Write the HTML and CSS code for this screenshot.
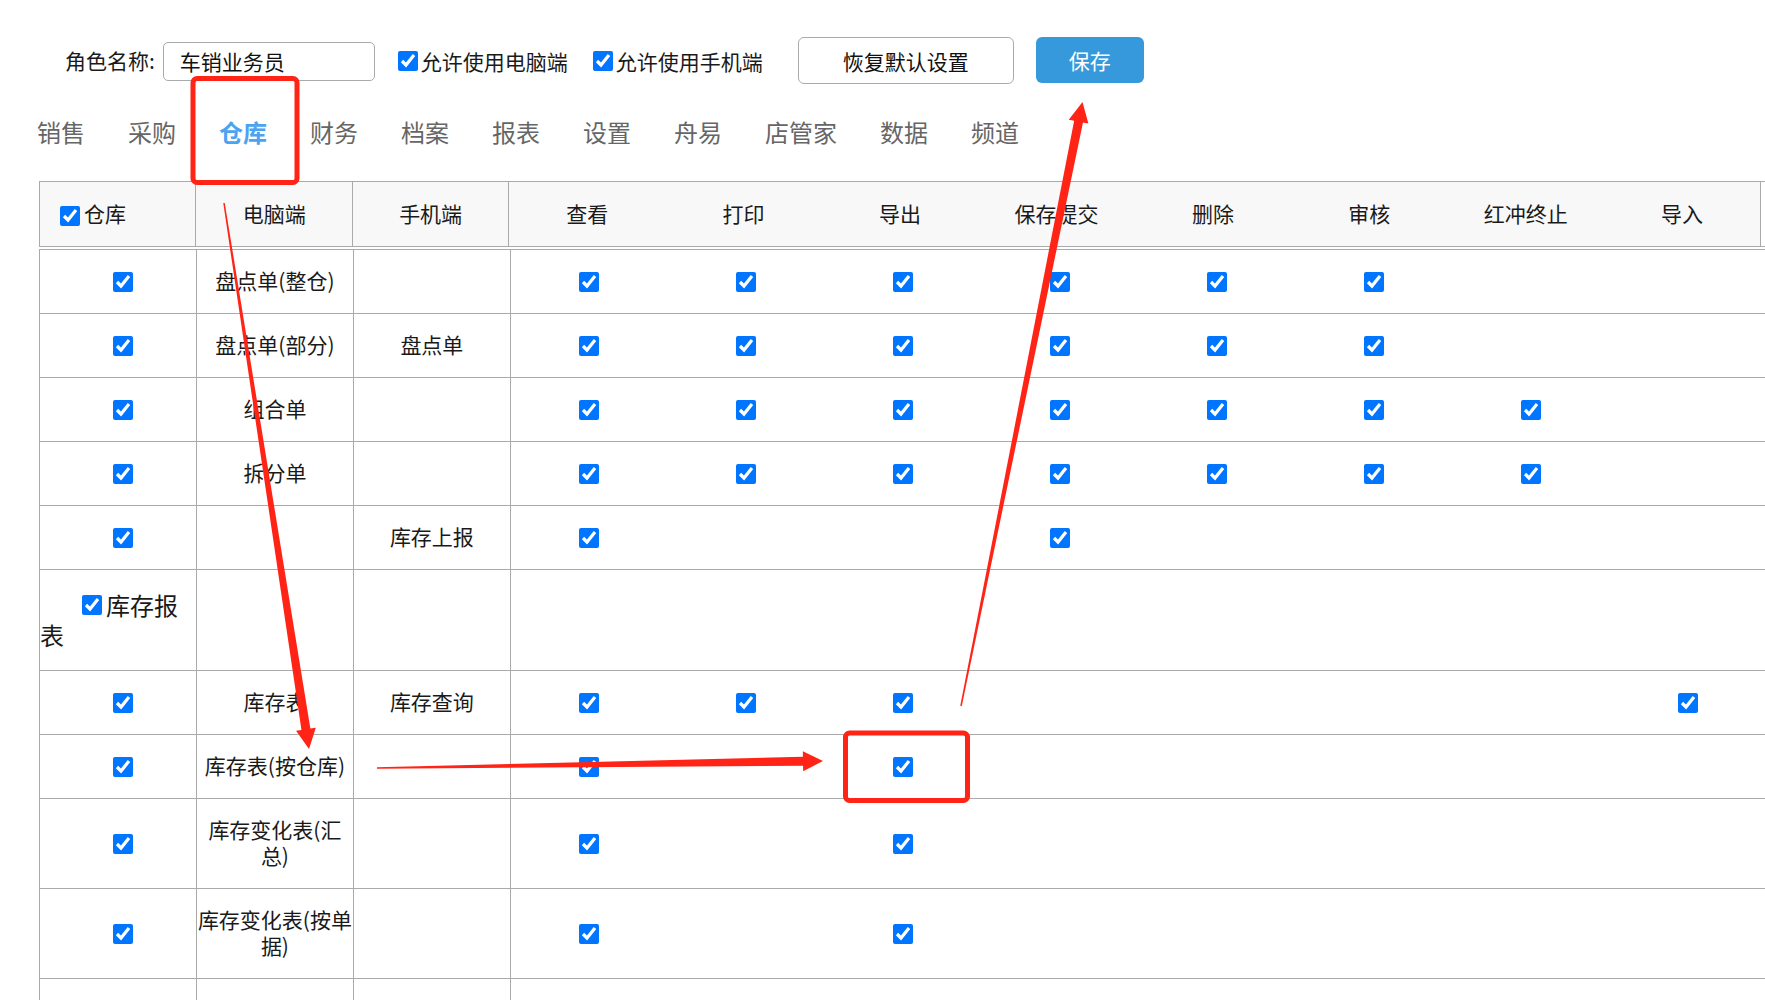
FILE: index.html
```html
<!DOCTYPE html>
<html lang="zh-CN">
<head>
<meta charset="utf-8">
<title>角色权限</title>
<link rel="stylesheet" href="styles.css">
</head>
<body>
<div class="page">
  <div class="toolbar">
    <span class="label">角色名称:</span>
    <input class="name-input" type="text" value="车销业务员">
    <label class="opt opt-pc"><input type="checkbox" class="cb" checked>允许使用电脑端</label>
    <label class="opt opt-mobile"><input type="checkbox" class="cb" checked>允许使用手机端</label>
    <button class="btn btn-reset">恢复默认设置</button>
    <button class="btn btn-save">保存</button>
  </div>

  <nav class="tabs">
    <span class="tab">销售</span>
    <span class="tab">采购</span>
    <span class="tab active">仓库</span>
    <span class="tab">财务</span>
    <span class="tab">档案</span>
    <span class="tab">报表</span>
    <span class="tab">设置</span>
    <span class="tab">舟易</span>
    <span class="tab">店管家</span>
    <span class="tab">数据</span>
    <span class="tab">频道</span>
  </nav>

  <div class="grid-head">
    <table class="head-table">
      <tr>
        <th class="th-first"><input type="checkbox" class="cb cb-head" checked>仓库</th>
        <th>电脑端</th>
        <th>手机端</th>
        <th>查看</th>
        <th>打印</th>
        <th>导出</th>
        <th>保存提交</th>
        <th>删除</th>
        <th>审核</th>
        <th>红冲终止</th>
        <th>导入</th>
      </tr>
    </table>
  </div>

  <div class="grid-body">
    <table class="body-table">
      <tr>
        <td class="c-first"><input type="checkbox" class="cb" checked></td>
        <td>盘点单(整仓)</td><td></td>
        <td><input type="checkbox" class="cb" checked></td>
        <td><input type="checkbox" class="cb" checked></td>
        <td><input type="checkbox" class="cb" checked></td>
        <td><input type="checkbox" class="cb" checked></td>
        <td><input type="checkbox" class="cb" checked></td>
        <td><input type="checkbox" class="cb" checked></td>
        <td></td><td></td>
      </tr>
      <tr>
        <td class="c-first"><input type="checkbox" class="cb" checked></td>
        <td>盘点单(部分)</td><td>盘点单</td>
        <td><input type="checkbox" class="cb" checked></td>
        <td><input type="checkbox" class="cb" checked></td>
        <td><input type="checkbox" class="cb" checked></td>
        <td><input type="checkbox" class="cb" checked></td>
        <td><input type="checkbox" class="cb" checked></td>
        <td><input type="checkbox" class="cb" checked></td>
        <td></td><td></td>
      </tr>
      <tr>
        <td class="c-first"><input type="checkbox" class="cb" checked></td>
        <td>组合单</td><td></td>
        <td><input type="checkbox" class="cb" checked></td>
        <td><input type="checkbox" class="cb" checked></td>
        <td><input type="checkbox" class="cb" checked></td>
        <td><input type="checkbox" class="cb" checked></td>
        <td><input type="checkbox" class="cb" checked></td>
        <td><input type="checkbox" class="cb" checked></td>
        <td><input type="checkbox" class="cb" checked></td>
        <td></td>
      </tr>
      <tr>
        <td class="c-first"><input type="checkbox" class="cb" checked></td>
        <td>拆分单</td><td></td>
        <td><input type="checkbox" class="cb" checked></td>
        <td><input type="checkbox" class="cb" checked></td>
        <td><input type="checkbox" class="cb" checked></td>
        <td><input type="checkbox" class="cb" checked></td>
        <td><input type="checkbox" class="cb" checked></td>
        <td><input type="checkbox" class="cb" checked></td>
        <td><input type="checkbox" class="cb" checked></td>
        <td></td>
      </tr>
      <tr>
        <td class="c-first"><input type="checkbox" class="cb" checked></td>
        <td></td><td>库存上报</td>
        <td><input type="checkbox" class="cb" checked></td>
        <td></td><td></td>
        <td><input type="checkbox" class="cb" checked></td>
        <td></td><td></td><td></td><td></td>
      </tr>
      <tr class="group-row">
        <td class="c-group"><input type="checkbox" class="cb cb-group" checked>库存报表</td>
        <td></td><td></td><td></td><td></td><td></td><td></td><td></td><td></td><td></td><td></td>
      </tr>
      <tr>
        <td class="c-first"><input type="checkbox" class="cb" checked></td>
        <td>库存表</td><td>库存查询</td>
        <td><input type="checkbox" class="cb" checked></td>
        <td><input type="checkbox" class="cb" checked></td>
        <td><input type="checkbox" class="cb" checked></td>
        <td></td><td></td><td></td><td></td>
        <td><input type="checkbox" class="cb" checked></td>
      </tr>
      <tr>
        <td class="c-first"><input type="checkbox" class="cb" checked></td>
        <td>库存表(按仓库)</td><td></td>
        <td><input type="checkbox" class="cb" checked></td>
        <td></td>
        <td><input type="checkbox" class="cb" checked></td>
        <td></td><td></td><td></td><td></td><td></td>
      </tr>
      <tr>
        <td class="c-first"><input type="checkbox" class="cb" checked></td>
        <td>库存变化表(汇总)</td><td></td>
        <td><input type="checkbox" class="cb" checked></td>
        <td></td>
        <td><input type="checkbox" class="cb" checked></td>
        <td></td><td></td><td></td><td></td><td></td>
      </tr>
      <tr>
        <td class="c-first"><input type="checkbox" class="cb" checked></td>
        <td>库存变化表(按单据)</td><td></td>
        <td><input type="checkbox" class="cb" checked></td>
        <td></td>
        <td><input type="checkbox" class="cb" checked></td>
        <td></td><td></td><td></td><td></td><td></td>
      </tr>
      <tr>
        <td class="c-first"></td>
        <td></td><td></td><td></td><td></td><td></td><td></td><td></td><td></td><td></td><td></td>
      </tr>
    </table>
  </div>

  <svg class="annot" width="1765" height="1000" viewBox="0 0 1765 1000" xmlns="http://www.w3.org/2000/svg">
    <rect x="193" y="78.5" width="104" height="104" rx="4" fill="none" stroke="#ff2416" stroke-width="5"/>
    <rect x="845.5" y="733" width="122" height="67.5" rx="4" fill="none" stroke="#ff2416" stroke-width="5"/>
    <polygon fill="#ff2416" points="223.26,203.12 301.47,729.93 296.04,730.78 309,749 315.80,727.70 310.37,728.55 224.74,202.88"/>
    <polygon fill="#ff2416" points="377.01,768.75 803.07,765.81 803.16,771.31 823,761 802.84,751.31 802.93,756.81 376.99,767.25"/>
    <polygon fill="#ff2416" points="961.74,706.15 1082.97,122.50 1088.36,123.58 1082.5,102 1068.76,119.64 1074.15,120.72 960.26,705.85"/>
  </svg>
</div>
</body>
</html>
```
FILE: styles.css
```css
html, body {
  margin: 0;
  padding: 0;
  background: #fff;
}
body {
  font-family: "Noto Sans CJK SC", "Noto Sans", sans-serif;
  color: #1a1a1a;
  overflow: hidden;
}
.page {
  position: relative;
  width: 1765px;
  height: 1000px;
  overflow: hidden;
}
.cb {
  width: 20px;
  height: 20px;
  margin: 0;
  vertical-align: middle;
  accent-color: #0075ff;
}

/* toolbar */
.toolbar {
  display: flex;
  align-items: center;
  height: 47px;
  padding: 37px 0 0 65px;
  font-size: 21px;
  line-height: 26px;
}
.label {
  margin-right: 8px;
  position: relative;
  top: -1px;
}
.name-input {
  box-sizing: border-box;
  width: 212px;
  height: 39px;
  margin-top: 2px;
  padding: 0 0 2px 16px;
  border: 1px solid #aaa;
  border-radius: 5px;
  font-family: inherit;
  font-size: 21px;
  color: #111;
  outline: none;
}
.opt {
  display: flex;
  align-items: center;
}
.opt .cb {
  margin-right: 3px;
}
.opt-pc {
  margin-left: 23px;
}
.opt-mobile {
  margin-left: 25px;
}
.btn {
  box-sizing: border-box;
  font-family: inherit;
  font-size: 21px;
  border-radius: 6px;
  cursor: pointer;
}
.btn-reset {
  margin-left: 35px;
  width: 216px;
  height: 47px;
  background: #fff;
  border: 1px solid #aaa;
  color: #111;
}
.btn-save {
  margin-left: 22px;
  width: 108px;
  height: 46px;
  margin-bottom: 1px;
  background: #3599dc;
  border: none;
  color: #fff;
}

/* tabs */
.tabs {
  display: flex;
  gap: 43px;
  margin-top: 33px;
  padding-left: 37px;
  height: 30px;
  font-size: 24px;
  line-height: 30px;
  color: #666;
}
.tab.active {
  color: #4ba3f2;
  font-weight: bold;
}

/* grid head */
.grid-head {
  margin-top: 34px;
  margin-left: 39px;
  border-top: 1px solid #aaa;
  border-bottom: 1px solid #aaa;
  background: #fff;
}
.head-table {
  width: 1722px;
  table-layout: fixed;
  border-collapse: collapse;
  background: #f8f8f8;
}
.head-table th {
  border-left: 1px solid #aaa;
  border-right: 1px solid #aaa;
  padding: 18px 0 20px;
  height: 26px;
  line-height: 26px;
  font-size: 21px;
  font-weight: normal;
  color: #1a1a1a;
  text-align: center;
  white-space: nowrap;
}
.head-table th:nth-child(n+4) {
  border-left: none;
  border-right: none;
}
.head-table th:last-child {
  border-right: 1px solid #aaa;
}
.head-table th.th-first {
  text-align: left;
  padding-left: 20px;
}
.cb-head {
  margin-right: 4px;
  position: relative;
  top: 0;
}

/* grid body */
.grid-body {
  margin-top: 2px;
  margin-left: 39px;
}
.body-table {
  width: 1727px;
  table-layout: fixed;
  border-collapse: collapse;
}
.body-table td {
  border: 1px solid #aaa;
  padding: 17px 0 20px;
  line-height: 26px;
  font-size: 21px;
  color: #1a1a1a;
  text-align: center;
  vertical-align: middle;
}
.body-table td:nth-child(n+4) {
  border-left: none;
  border-right: none;
}
.body-table td .cb {
  vertical-align: top;
  margin-top: 5px;
}
.body-table td.c-first {
  padding-left: 10px;
}
.body-table tr.group-row td {
  padding: 20px 0;
  line-height: 30px;
}
.body-table td.c-group {
  text-align: left;
  text-indent: 42px;
  font-size: 24px;
}
.body-table td .cb-group {
  margin: 5px 4px 0 0;
}

/* annotations */
.annot {
  position: absolute;
  left: 0;
  top: 0;
  pointer-events: none;
}
```
